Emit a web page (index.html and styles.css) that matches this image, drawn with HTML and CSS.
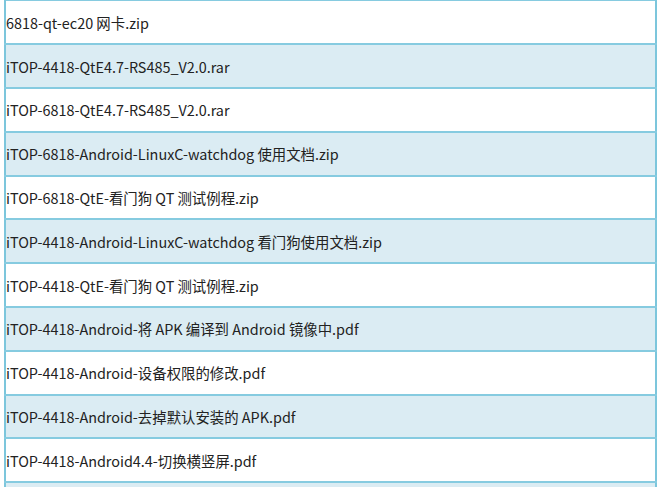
FILE: index.html
```html
<!DOCTYPE html>
<html lang="zh">
<head>
<meta charset="utf-8">
<link rel="stylesheet" href="styles.css">
</head>
<body>
<table class="files">
<tbody>
<tr><td>6818-qt-ec20 网卡.zip</td></tr>
<tr class="alt"><td>iTOP-4418-QtE4.7-RS485_V2.0.rar</td></tr>
<tr><td>iTOP-6818-QtE4.7-RS485_V2.0.rar</td></tr>
<tr class="alt"><td>iTOP-6818-Android-LinuxC-watchdog 使用文档.zip</td></tr>
<tr><td>iTOP-6818-QtE-看门狗 QT 测试例程.zip</td></tr>
<tr class="alt"><td>iTOP-4418-Android-LinuxC-watchdog 看门狗使用文档.zip</td></tr>
<tr><td>iTOP-4418-QtE-看门狗 QT 测试例程.zip</td></tr>
<tr class="alt"><td>iTOP-4418-Android-将 APK 编译到 Android 镜像中.pdf</td></tr>
<tr><td>iTOP-4418-Android-设备权限的修改.pdf</td></tr>
<tr class="alt"><td>iTOP-4418-Android-去掉默认安装的 APK.pdf</td></tr>
<tr><td>iTOP-4418-Android4.4-切换横竖屏.pdf</td></tr>
<tr class="alt"><td>&nbsp;</td></tr>
</tbody>
</table>
</body>
</html>
```
FILE: styles.css
```css
html, body {
  margin: 0;
  padding: 0;
  background: #ffffff;
  overflow: hidden;
  height: 487px;
}
.files {
  margin-left: 4px;
  width: 653px;
  border-collapse: collapse;
  border-top: 1px solid #86cbe0;
  font-family: "Noto Sans CJK SC", "Noto Sans", sans-serif;
  font-size: 14.4px;
  color: #222222;
}
.files td {
  height: 43.8px;
  padding: 0;
  border-left: 2px solid #7cc6dc;
  border-right: 2px solid #7cc6dc;
  border-bottom: 2px solid #86cbe0;
  vertical-align: middle;
  box-sizing: border-box;
  white-space: nowrap;
}
.files tr.alt td {
  background: #dbecf3;
}
```
